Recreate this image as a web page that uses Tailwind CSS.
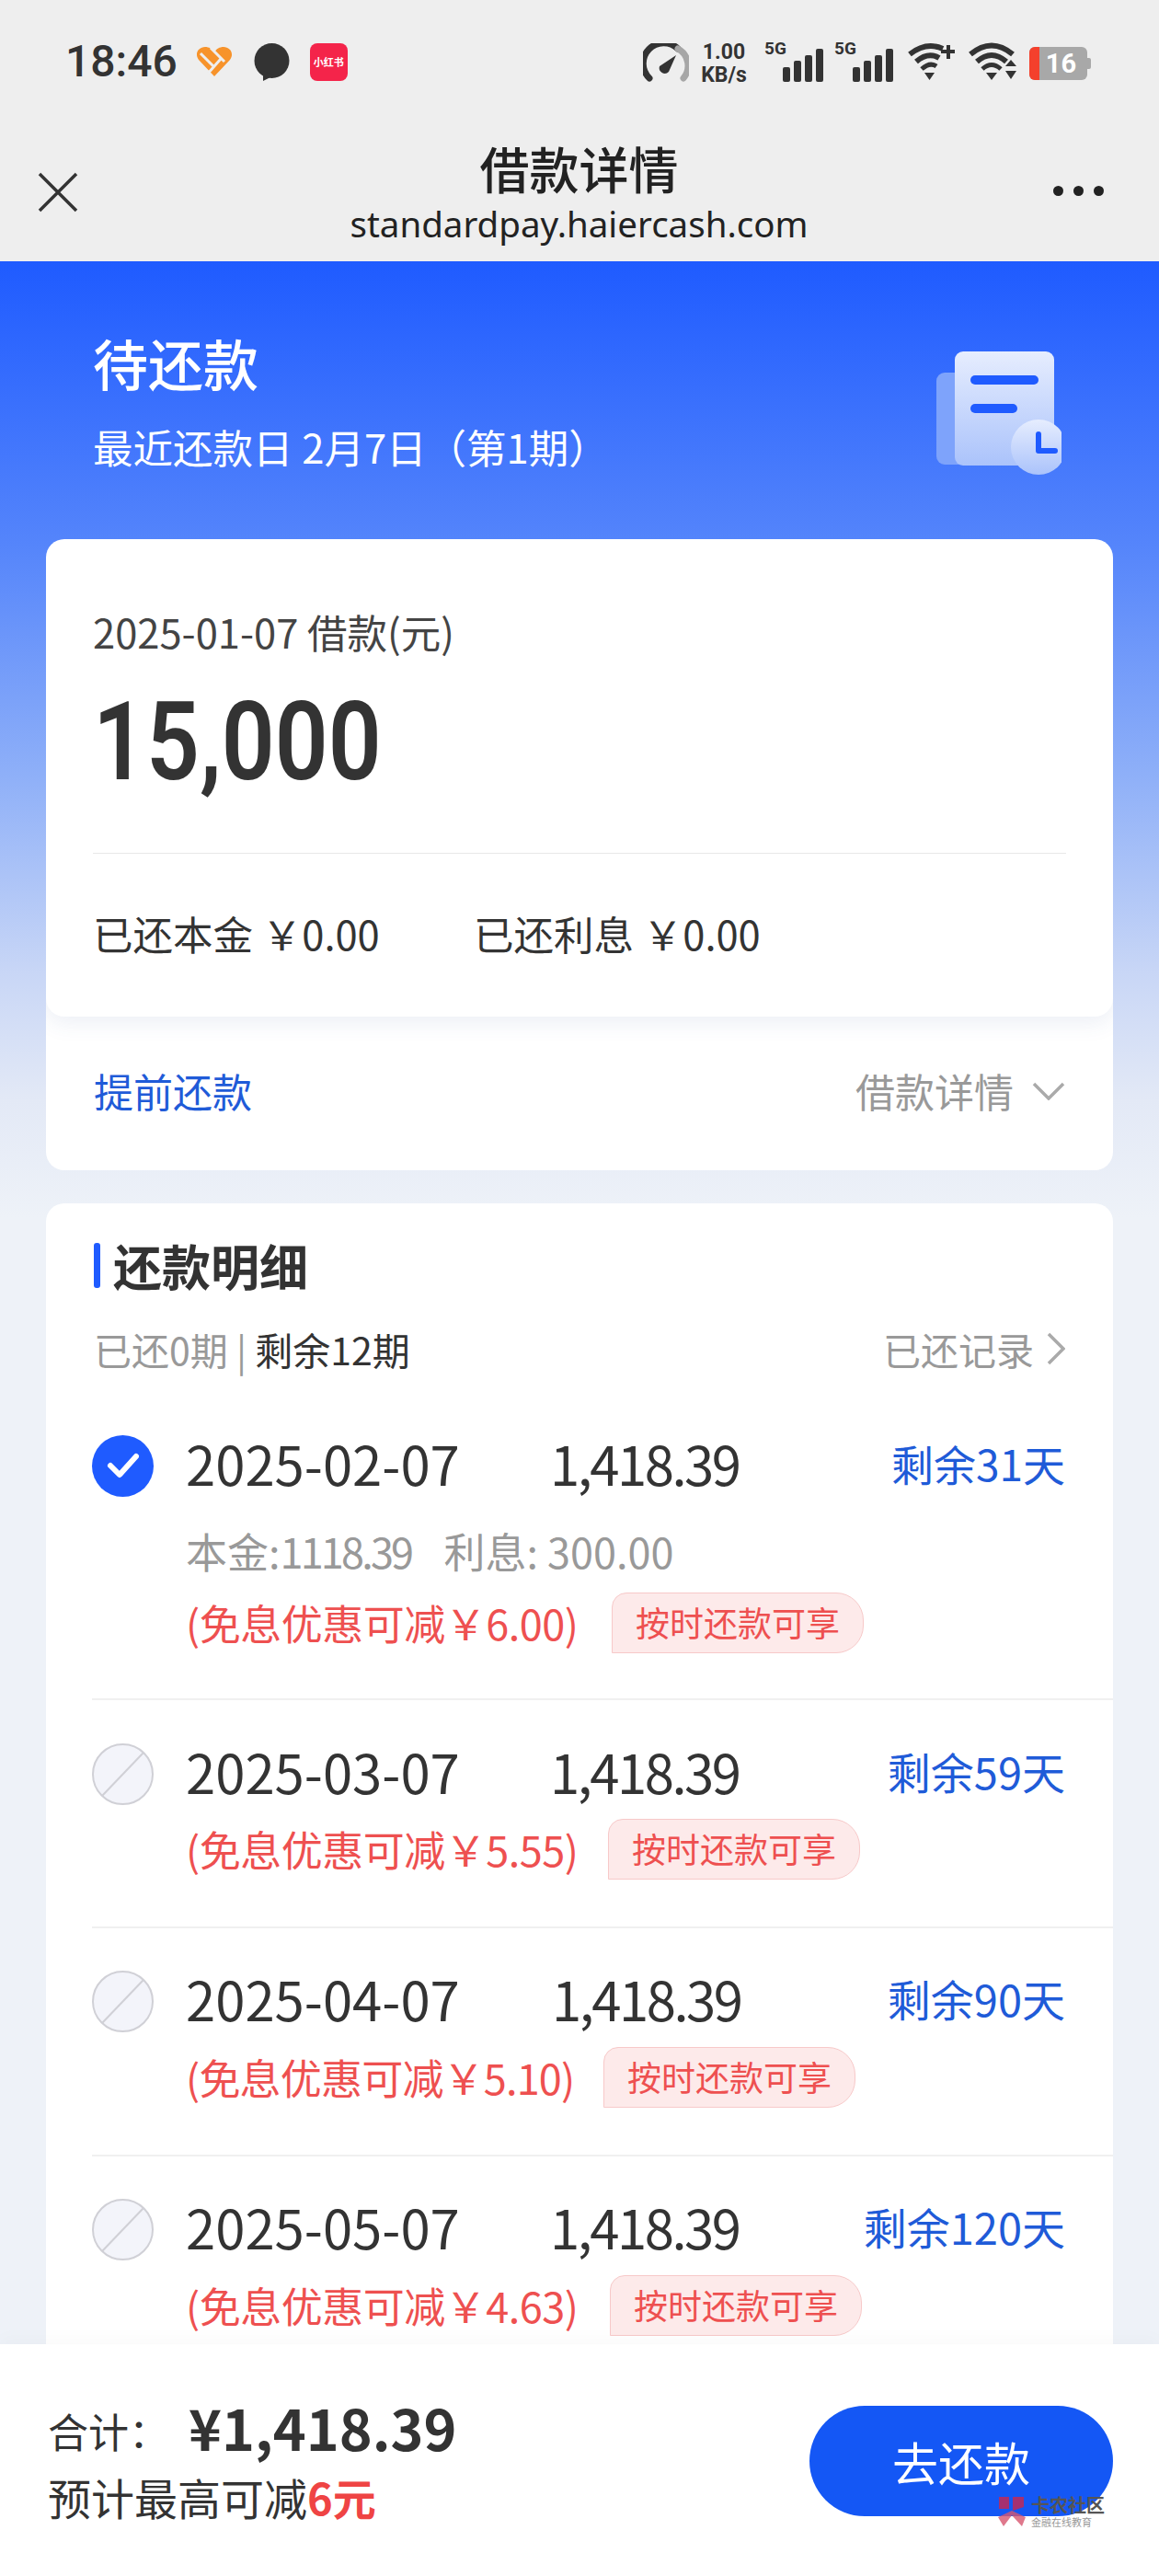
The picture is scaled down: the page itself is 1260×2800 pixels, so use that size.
<!DOCTYPE html>
<html lang="zh-CN">
<head>
    <meta charset="UTF-8">
    <meta name="viewport" content="width=device-width, initial-scale=1.0">
    <title>借款详情</title>
    <script src="https://cdn.jsdelivr.net/npm/@tailwindcss/browser@4"></script>
</head>
<body class="font-['Noto_Sans_CJK_SC','Noto_Sans',sans-serif] bg-[#eef2f8] text-[#333333]">
<div class="relative w-[1260px] h-[2800px] overflow-hidden flex flex-col">

    <!-- status bar -->
    <div class="h-[130px] shrink-0 bg-[#eeeeee] flex items-start pt-[44px] pl-[71px] pr-[74px] justify-between">
        <div class="flex items-center">
            <span class="font-['Roboto'] font-medium text-[48px] leading-[46px] text-[#333]">18:46</span>
            <svg class="ml-[20px]" width="40" height="34" viewBox="0 0 40 34">
                <path d="M20 33 L3 15 C-2 8 3 1 10 1 C14 1 18 3 20 7 C22 3 26 1 30 1 C37 1 42 8 37 15 Z" fill="#f7932b"/>
                <path d="M5 8 L19 22 M16 2 L31 17 M12 31 L27 14" stroke="#eeeeee" stroke-width="3" fill="none"/>
            </svg>
            <svg class="ml-[22px]" width="41" height="41" viewBox="0 0 41 41">
                <circle cx="20.5" cy="19" r="19" fill="#333"/>
                <path d="M11 30 L11 41 L23 35 Z" fill="#333"/>
            </svg>
            <div class="ml-[21px] w-[41px] h-[41px] rounded-[8px] bg-[#f4244a] flex items-center justify-center text-white text-[11px] font-bold leading-none whitespace-nowrap">小红书</div>
        </div>
        <div class="flex items-start">
            <svg width="50" height="42" viewBox="0 0 50 42" class="mt-[3px]">
                <path d="M7 38 A21 21 0 0 1 38 6" stroke="#333" stroke-width="7" fill="none" stroke-linecap="round"/>
                <path d="M38 6 A21 21 0 0 1 44 38" stroke="#a6a6a6" stroke-width="7" fill="none" stroke-linecap="round"/>
                <path d="M36 13 L28 31 A6 6 0 0 1 18 25 Z" fill="#333"/>
            </svg>
            <div class="ml-[10px] w-[56px] text-center font-['Roboto'] font-bold text-[#333] text-[23px] leading-[25px]">1.00<br>KB/s</div>
            <div class="ml-[16px] relative w-[66px] h-[46px]">
                <span class="absolute left-0 top-0 font-['Roboto'] font-bold text-[19px] leading-[18px]">5G</span>
                <svg class="absolute left-[20px] top-[9px]" width="46" height="36" viewBox="0 0 46 36">
                    <rect x="0" y="20" width="8" height="16" rx="2" fill="#333"/>
                    <rect x="12" y="13" width="8" height="23" rx="2" fill="#333"/>
                    <rect x="24" y="7" width="8" height="29" rx="2" fill="#333"/>
                    <rect x="36" y="0" width="8" height="36" rx="2" fill="#333"/>
                </svg>
            </div>
            <div class="ml-[10px] relative w-[66px] h-[46px]">
                <span class="absolute left-0 top-0 font-['Roboto'] font-bold text-[19px] leading-[18px]">5G</span>
                <svg class="absolute left-[20px] top-[9px]" width="46" height="36" viewBox="0 0 46 36">
                    <rect x="0" y="20" width="8" height="16" rx="2" fill="#333"/>
                    <rect x="12" y="13" width="8" height="23" rx="2" fill="#333"/>
                    <rect x="24" y="7" width="8" height="29" rx="2" fill="#333"/>
                    <rect x="36" y="0" width="8" height="36" rx="2" fill="#333"/>
                </svg>
            </div>
            <svg class="ml-[14px] mt-[2px]" width="52" height="42" viewBox="0 0 52 42">
                <path d="M2 13 Q20 -1 38 7" stroke="#333" stroke-width="6" fill="none"/>
                <path d="M9 21 Q22 10 34 17" stroke="#333" stroke-width="6" fill="none"/>
                <path d="M15 29 Q24 21 31 26" stroke="#333" stroke-width="5" fill="none"/>
                <path d="M18 33 L29 33 L23.5 41 Z" fill="#333"/>
                <path d="M44 3 V18 M36 10 H51" stroke="#333" stroke-width="4"/>
            </svg>
            <svg class="ml-[14px] mt-[2px]" width="54" height="42" viewBox="0 0 54 42">
                <path d="M2 13 Q25 -6 48 13" stroke="#333" stroke-width="6" fill="none"/>
                <path d="M9 21 Q25 7 41 21" stroke="#333" stroke-width="6" fill="none"/>
                <path d="M15 29 Q25 20 35 29" stroke="#333" stroke-width="5" fill="none"/>
                <path d="M19 33 L31 33 L25 41 Z" fill="#333"/>
                <path d="M40 26 L46 19 L52 26 Z M40 31 L52 31 L46 40 Z" fill="#333"/>
            </svg>
            <div class="ml-[12px] mt-[7px] flex items-center">
                <div class="w-[63px] h-[36px] rounded-[6px] bg-[#a8a8a8] overflow-hidden relative flex items-center justify-center pl-[6px]">
                    <div class="absolute left-0 top-0 bottom-0 w-[11px] bg-[#f4402c]"></div>
                    <span class="relative font-['Roboto'] font-bold text-white text-[29px] leading-none">16</span>
                </div>
                <div class="w-[4px] h-[12px] bg-[#a8a8a8] rounded-r-[2px]"></div>
            </div>
        </div>
    </div>

    <!-- nav bar -->
    <div class="h-[154px] shrink-0 bg-[#eeeeee] flex items-start pl-[41px] pr-[60px]">
        <div class="flex-1">
            <svg class="mt-[57px]" width="44" height="44" viewBox="0 0 44 44">
                <path d="M2 2 L42 42 M42 2 L2 42" stroke="#333" stroke-width="3.5"/>
            </svg>
        </div>
        <div class="text-center pt-[21px] w-[520px] translate-x-[9px]">
            <div class="text-[54px] leading-[64px] font-medium text-[#222]">借款详情</div>
            <div class="text-[38.5px] leading-[50px] mt-[3px] text-[#222] font-['Noto_Sans']">standardpay.haiercash.com</div>
        </div>
        <div class="flex-1 flex justify-end">
            <div class="mt-[72px] flex gap-[11px]">
                <span class="w-[11px] h-[11px] rounded-full bg-[#222]"></span>
                <span class="w-[11px] h-[11px] rounded-full bg-[#222]"></span>
                <span class="w-[11px] h-[11px] rounded-full bg-[#222]"></span>
            </div>
        </div>
    </div>

    <!-- scroll area -->
    <div class="flex-1 min-h-0 overflow-hidden bg-[linear-gradient(180deg,#1f5bff_0px,#5585fb_309px,#8fb0f8_561px,#c8d6f6_772px,#e3e9f6_912px,#eef2f8_1040px)]">

        <!-- hero -->
        <div class="h-[302px] flex justify-between pl-[101px] pr-[106px]">
            <div class="pt-[70px]">
                <div class="text-[60px] leading-[80px] font-medium text-white">待还款</div>
                <div class="text-[43.5px] leading-[60px] mt-[22px] text-white">最近还款日 2月7日（第1期）</div>
            </div>
            <svg class="mt-[96px]" width="140" height="140" viewBox="0 0 140 140">
                <defs>
                    <linearGradient id="docFill" x1="0" y1="0" x2="0" y2="1">
                        <stop offset="0" stop-color="#e6edfe"/>
                        <stop offset="1" stop-color="#abc3fb"/>
                    </linearGradient>
                </defs>
                <rect x="4" y="25" width="50" height="100" rx="9" fill="#7ea3fb"/>
                <rect x="24" y="2" width="108" height="124" rx="9" fill="url(#docFill)"/>
                <rect x="41" y="28" width="74" height="10" rx="5" fill="#1f5bff"/>
                <rect x="41" y="59" width="51" height="10" rx="5" fill="#1f5bff"/>
                <circle cx="115" cy="106" r="30" fill="url(#docFill)"/>
                <path d="M115 92 V110 H133" stroke="#1f5bff" stroke-width="6" fill="none" stroke-linecap="round" stroke-linejoin="round"/>
            </svg>
        </div>

        <!-- loan card -->
        <div class="mx-[50px] rounded-[20px] bg-white overflow-hidden">
            <div class="h-[519px] px-[51px] rounded-b-[20px] shadow-[0_6px_24px_rgba(60,90,160,0.10)] relative">
                <div class="pt-[76px] text-[43.5px] leading-[50px] text-[#444]">2025-01-07 借款(元)</div>
                <div class="mt-[30px] h-[130px] text-[118px] leading-[130px] font-semibold font-['Roboto'] text-[#333] origin-left scale-x-[.86]">15,000</div>
                <div class="mt-[55px] border-t border-[#e8e8e8]"></div>
                <div class="mt-[57px] flex text-[43.5px] leading-[60px] text-[#333]">
                    <span class="w-[414px]">已还本金 ￥0.00</span>
                    <span>已还利息 ￥0.00</span>
                </div>
            </div>
            <div class="h-[167px] px-[52px] pb-[6px] flex items-center justify-between text-[43px]">
                <span class="text-[#1f5bd8]">提前还款</span>
                <span class="flex items-center text-[#999]">借款详情
                    <svg class="ml-[20px]" width="36" height="20" viewBox="0 0 36 20"><path d="M2 2 L18 18 L34 2" stroke="#aaa" stroke-width="3.5" fill="none"/></svg>
                </span>
            </div>
        </div>

        <!-- schedule card -->
        <div class="mt-[36px] mx-[50px] rounded-t-[20px] bg-white">
            <div class="pl-[52px] pr-[52px] pt-[42px]">
                <div class="flex items-center h-[50px]">
                    <span class="w-[7px] h-[49px] rounded-[3px] bg-[#1f5bff]"></span>
                    <span class="ml-[14px] text-[53px] leading-[50px] font-bold text-[#333]">还款明细</span>
                </div>
                <div class="mt-[41px] flex items-center justify-between text-[41px] leading-[50px]">
                    <span class="text-[#999]">已还0期 | <span class="text-[#333]">剩余12期</span></span>
                    <span class="flex items-center text-[#999]">已还记录
                        <svg class="ml-[14px]" width="20" height="36" viewBox="0 0 20 36"><path d="M2 2 L18 18 L2 34" stroke="#aaa" stroke-width="3.5" fill="none"/></svg>
                    </span>
                </div>
            </div>

            <!-- row 1 -->
            <div class="mt-[68px] ml-[50px] h-[289px] border-b-2 border-[#f0f0f0] pr-[52px]">
                <div class="flex items-center h-[68px]">
                    <span class="w-[67px] h-[67px] rounded-full bg-[#1f5bff] flex items-center justify-center">
                        <svg width="38" height="30" viewBox="0 0 38 30"><path d="M5 15 L15 25 L33 5" stroke="#fff" stroke-width="6" fill="none" stroke-linecap="round" stroke-linejoin="round"/></svg>
                    </span>
                    <span class="ml-[35px] w-[396px] pb-[6px] text-[58px] leading-[68px] text-[#333]">2025-02-07</span>
                    <span class="pb-[6px] text-[58px] leading-[68px] tracking-[-2.5px] text-[#333]">1,418.39</span>
                    <span class="ml-auto pb-[6px] text-[46px] text-[#1f5bd8]">剩余31天</span>
                </div>
                <div class="ml-[102px] mt-[34px] text-[45px] leading-[50px] text-[#999] whitespace-pre">本金:<span class="tracking-[-2.8px]">1118.39</span><span class="ml-[5px]">   利息: 300.00</span></div>
                <div class="ml-[102px] mt-[20px] flex items-center">
                    <span class="w-[427px] whitespace-nowrap tracking-[-0.5px] text-[45px] leading-[56px] text-[#ee5050]">(免息优惠可减￥6.00)</span>
                    <span class="ml-[36px] h-[66px] px-[25px] flex items-center text-[37px] text-[#ee5050] bg-[#fdeaea] border border-[#f7c9c9] rounded-tl-[16px] rounded-tr-[30px] rounded-br-[30px]">按时还款可享</span>
                </div>
            </div>

            <!-- row 2 -->
            <div class="ml-[50px] h-[248px] border-b-2 border-[#f0f0f0] pr-[52px] pt-[46px]">
                <div class="flex items-center h-[68px]">
                    <svg width="67" height="67" viewBox="0 0 67 67"><circle cx="33.5" cy="33.5" r="32.5" fill="#f3f4fa" stroke="#d0d0d6" stroke-width="2"/><path d="M11 57 L56 10" stroke="#d0d0d6" stroke-width="2"/></svg>
                    <span class="ml-[35px] w-[396px] pb-[6px] text-[58px] leading-[68px] text-[#333]">2025-03-07</span>
                    <span class="pb-[6px] text-[58px] leading-[68px] tracking-[-2.5px] text-[#333]">1,418.39</span>
                    <span class="ml-auto pb-[6px] text-[47px] text-[#1f5bd8]">剩余59天</span>
                </div>
                <div class="ml-[102px] mt-[15px] flex items-center">
                    <span class="w-[423px] whitespace-nowrap tracking-[-0.5px] text-[45px] leading-[56px] text-[#ee5050]">(免息优惠可减￥5.55)</span>
                    <span class="ml-[36px] h-[66px] px-[25px] flex items-center text-[37px] text-[#ee5050] bg-[#fdeaea] border border-[#f7c9c9] rounded-tl-[16px] rounded-tr-[30px] rounded-br-[30px]">按时还款可享</span>
                </div>
            </div>

            <!-- row 3 -->
            <div class="ml-[50px] h-[248px] border-b-2 border-[#f0f0f0] pr-[52px] pt-[45px]">
                <div class="flex items-center h-[68px]">
                    <svg width="67" height="67" viewBox="0 0 67 67"><circle cx="33.5" cy="33.5" r="32.5" fill="#f3f4fa" stroke="#d0d0d6" stroke-width="2"/><path d="M11 57 L56 10" stroke="#d0d0d6" stroke-width="2"/></svg>
                    <span class="ml-[35px] w-[398px] pb-[6px] text-[58px] leading-[68px] text-[#333]">2025-04-07</span>
                    <span class="pb-[6px] text-[58px] leading-[68px] tracking-[-2.5px] text-[#333]">1,418.39</span>
                    <span class="ml-auto pb-[6px] text-[47px] text-[#1f5bd8]">剩余90天</span>
                </div>
                <div class="ml-[102px] mt-[16px] flex items-center">
                    <span class="w-[418px] whitespace-nowrap tracking-[-0.8px] text-[45px] leading-[56px] text-[#ee5050]">(免息优惠可减￥5.10)</span>
                    <span class="ml-[36px] h-[66px] px-[25px] flex items-center text-[37px] text-[#ee5050] bg-[#fdeaea] border border-[#f7c9c9] rounded-tl-[16px] rounded-tr-[30px] rounded-br-[30px]">按时还款可享</span>
                </div>
            </div>

            <!-- row 4 -->
            <div class="ml-[50px] h-[248px] pr-[52px] pt-[45px]">
                <div class="flex items-center h-[68px]">
                    <svg width="67" height="67" viewBox="0 0 67 67"><circle cx="33.5" cy="33.5" r="32.5" fill="#f3f4fa" stroke="#d0d0d6" stroke-width="2"/><path d="M11 57 L56 10" stroke="#d0d0d6" stroke-width="2"/></svg>
                    <span class="ml-[35px] w-[396px] pb-[6px] text-[58px] leading-[68px] text-[#333]">2025-05-07</span>
                    <span class="pb-[6px] text-[58px] leading-[68px] tracking-[-2.5px] text-[#333]">1,418.39</span>
                    <span class="ml-auto pb-[6px] text-[47px] text-[#1f5bd8]">剩余120天</span>
                </div>
                <div class="ml-[102px] mt-[16px] flex items-center">
                    <span class="w-[425px] whitespace-nowrap tracking-[-0.5px] text-[45px] leading-[56px] text-[#ee5050]">(免息优惠可减￥4.63)</span>
                    <span class="ml-[36px] h-[66px] px-[25px] flex items-center text-[37px] text-[#ee5050] bg-[#fdeaea] border border-[#f7c9c9] rounded-tl-[16px] rounded-tr-[30px] rounded-br-[30px]">按时还款可享</span>
                </div>
            </div>
        </div>
    </div>

    <!-- footer -->
    <div class="relative h-[252px] shrink-0 bg-white shadow-[0_-8px_16px_rgba(0,0,0,0.02)] flex items-start justify-between pl-[52px] pr-[50px] pt-[55px]">
        <div>
            <div class="flex items-center h-[70px]">
                <span class="mt-[8px] text-[44px] leading-[56px] text-[#333]">合计：</span>
                <span class="ml-[21px] text-[61px] leading-[70px] font-bold text-[#333]">¥1,418.39</span>
            </div>
            <div class="mt-[11px] text-[47px] leading-[60px] text-[#333]">预计最高可减<span class="font-bold text-[#ef4444]">6元</span></div>
        </div>
        <div class="mt-[12px] w-[330px] h-[120px] rounded-full bg-[#1457f5] flex items-center justify-center text-[50px] text-white">去还款</div>
    </div>

    <!-- watermark -->
    <div class="absolute left-[1083px] top-[2712px] flex items-start">
        <svg width="34" height="34" viewBox="0 0 34 34">
            <path d="M3 2 H14 V15 L3 15 Z M18 2 H30 V13 L18 17 Z" fill="#c9274f" opacity="0.8"/>
            <path d="M17 17 L2 24 L8 34 L17 22 L28 34 L32 24 Z" fill="#d7566f" opacity="0.8"/>
        </svg>
        <div class="ml-[4px] leading-none">
            <div class="text-[20px] leading-[22px] font-bold text-[#555]">卡农社区</div>
            <div class="mt-[1px] text-[11px] leading-[12px] text-[#999]">金融在线教育</div>
        </div>
    </div>
</div>
</body>
</html>
